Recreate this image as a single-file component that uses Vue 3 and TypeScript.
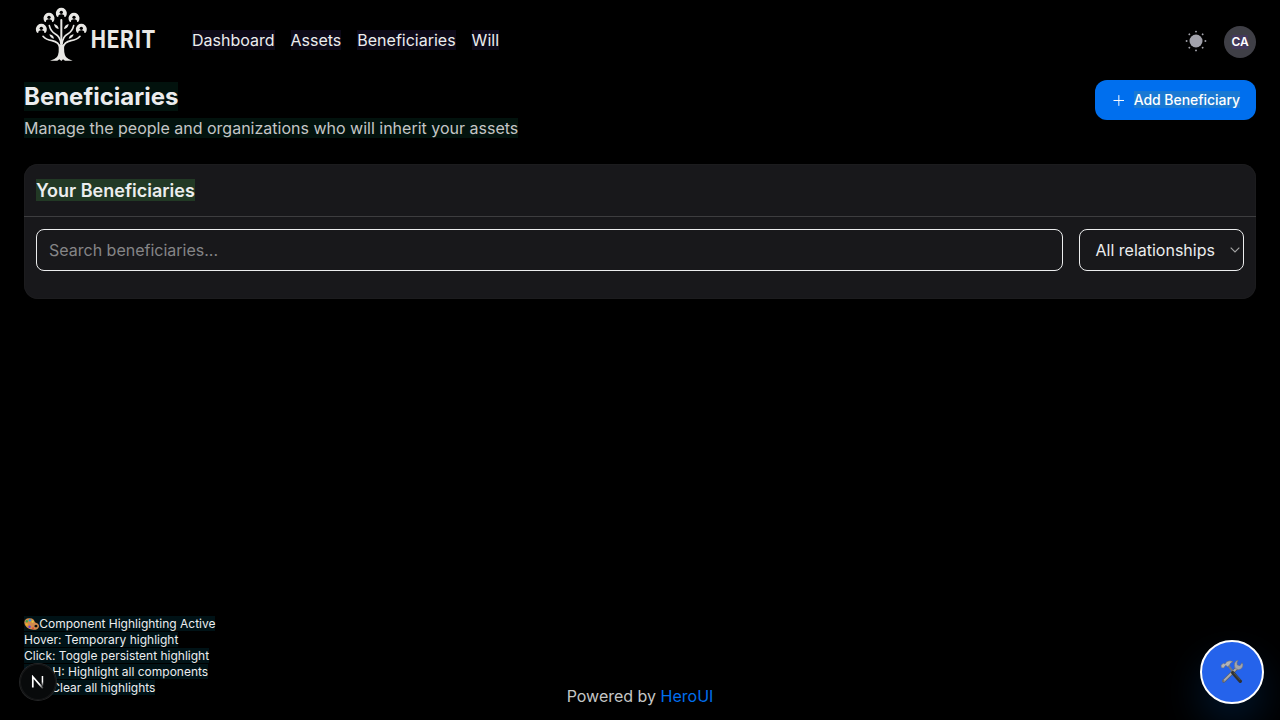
<script setup lang="ts">
import { ref } from 'vue'

const links: string[] = ['Dashboard', 'Assets', 'Beneficiaries', 'Will']
const heads: [number, number][] = [[112, 40], [75, 55], [150, 55], [52, 88], [172, 88]]
const rays: number[] = [0, 45, 90, 135, 180, 225, 270, 315]
const hints: string[] = [
  'Hover: Temporary highlight',
  'Click: Toggle persistent highlight',
  'Ctrl+H: Highlight all components',
  'Esc: Clear all highlights',
]
const search = ref('')
</script>

<template>
  <div class="page">
    <header class="navbar">
      <svg class="logo" viewBox="0 0 420 210" role="img" aria-label="Herit">
        <g fill="none" stroke="#e9e8e5" stroke-linecap="round">
          <path d="M112 60V150" stroke-width="6" />
          <path d="M76 77Q80 94 94 102Q109 110 111 132M149 77Q145 94 131 102Q116 110 114 132" stroke-width="5" />
          <path d="M57 109Q66 120 84 122Q105 126 109 145M168 109Q159 120 141 122Q120 126 116 145" stroke-width="5" />
        </g>
        <path d="M103 132Q112 138 121 132Q118 160 126 171Q132 178 146 182H123L117 178L112 183L106 178L100 182H78Q93 178 99 171Q107 160 103 132Z" fill="#e9e8e5" />
        <g fill="#e9e8e5">
          <path d="M90 72Q103 75 104 87Q92 86 90 72ZM134 72Q121 75 120 87Q132 86 134 72ZM76 103Q88 104 90 116Q79 115 76 103ZM149 103Q137 104 134 116Q146 115 149 103Z" />
        </g>
        <g v-for="([x, y], i) in heads" :key="i" :transform="`translate(${x} ${y})`">
          <path d="M-13 10A16.5 16.5 0 1 1 13 10L9 11Q10 3 0 3Q-10 3 -9 11Z" fill="#e9e8e5" />
          <circle cy="-3" r="5" fill="#000" />
          <path d="M-8 11Q-8 4 0 4Q8 4 8 11Z" fill="#000" />
        </g>
        <text transform="translate(200 143) scale(.84 1)" class="wordmark" textLength="230" lengthAdjust="spacing">HERIT</text>
      </svg>
      <nav class="links">
        <a v-for="link in links" :key="link"><span>{{ link }}</span></a>
      </nav>
      <div class="actions">
        <svg class="sun" viewBox="0 0 24 24" fill="#a1a1aa">
          <circle cx="12" cy="12" r="6.5" />
          <circle v-for="angle in rays" :key="angle" cx="12" cy="2.6" r="0.95" :transform="`rotate(${angle} 12 12)`" />
        </svg>
        <div class="avatar"><span>CA</span></div>
      </div>
    </header>

    <main>
      <section class="heading">
        <div>
          <h1><span>Beneficiaries</span></h1>
          <p><span>Manage the people and organizations who will inherit your assets</span></p>
        </div>
        <button class="add">
          <svg width="12" height="12" viewBox="0 0 12 12"><path d="M.5 6.5H11.5M6 1V12" stroke="#fff" stroke-width="1" /></svg>
          <span>Add Beneficiary</span>
        </button>
      </section>

      <section class="card">
        <div class="card-head"><h2>Your Beneficiaries</h2></div>
        <div class="filters">
          <input v-model="search" type="text" placeholder="Search beneficiaries..." />
          <div class="select">
            <span>All relationships</span>
            <svg width="10" height="6" viewBox="0 0 10 6"><path d="M.7 .7L5 5L9.3 .7" fill="none" stroke="#a5a5a5" stroke-width="1.1" /></svg>
          </div>
        </div>
      </section>
    </main>

    <footer>Powered by&nbsp;<a>HeroUI</a></footer>

    <aside class="hints">
      <div>
        <span><svg class="palette" viewBox="1 2 44 33" preserveAspectRatio="none">
          <path d="M17 3C7 2 1 8 2 16C4 29 20 36 34 34C48 31 46 18 37 16C31 15 32 10 29 7Q25 3 17 3Z" fill="#d08b4c" />
          <path d="M36 28Q42 26 39 22Q35 19 31 23Q30 28 36 28Z" fill="#080d0d" />
          <circle cx="9" cy="11" r="3.4" fill="#42a446" /><circle cx="18" cy="8" r="3.4" fill="#299ce0" />
          <circle cx="26" cy="12" r="3" fill="#e6cf38" /><circle cx="9" cy="20" r="3.3" fill="#f0b222" />
          <circle cx="17" cy="26" r="3.4" fill="#653bd8" /><circle cx="27" cy="30" r="2.6" fill="#dd4134" />
        </svg>Component Highlighting Active</span>
      </div>
      <div v-for="hint in hints" :key="hint"><span>{{ hint }}</span></div>
    </aside>

    <div class="dev-badge">
      <svg width="14" height="14" viewBox="0 0 14 14" fill="none">
        <defs>
          <linearGradient id="fade" x1="0" y1="0" x2="0" y2="1"><stop offset=".55" stop-color="#fff" /><stop offset="1" stop-color="#fff" stop-opacity="0" /></linearGradient>
          <linearGradient id="stroke-fade" x1="0" y1="0" x2="1" y2="1"><stop offset=".65" stop-color="#fff" /><stop offset="1" stop-color="#fff" stop-opacity=".15" /></linearGradient>
        </defs>
        <path d="M1.8 12.5V1.8L11.9 13.4" stroke="url(#stroke-fade)" stroke-width="1.7" />
        <rect x="10.7" y="1" width="1.5" height="10.5" fill="url(#fade)" />
      </svg>
    </div>

    <button class="tools" aria-label="Tools">
      <svg width="24" height="24" viewBox="0 0 72 72">
        <path d="M50 25L11 63" stroke="#5c5e63" stroke-width="10" stroke-linecap="round" />
        <path d="M50 25L11 63" stroke="#a8aaaf" stroke-width="6" stroke-linecap="round" />
        <circle cx="11" cy="63" r="2.5" fill="#555" />
        <path d="M55 1Q42 3 43 17Q44 29 55 29Q68 28 69 14L66 8L60 17L52 15L51 8Z" fill="#a3a5aa" stroke="#666970" stroke-width="1.5" />
        <path d="M25 16L42 40" stroke="#77787c" stroke-width="6" />
        <path d="M38 38L61 64" stroke="#303131" stroke-width="10" stroke-linecap="round" />
        <path d="M41 38L61 60" stroke="#555653" stroke-width="3" />
        <path d="M3 16L10 10L15 12L20 5Q30 0 39 5Q30 8 29 15L23 20L17 16L11 24L4 23Z" fill="#b2b3b6" stroke="#666970" stroke-width="1.5" />
      </svg>
    </button>
  </div>
</template>

<style>
body {
  margin: 0;
  background: #000;
}
</style>

<style scoped>
.page {
  box-sizing: border-box;
  position: relative;
  display: flex;
  flex-direction: column;
  height: 720px;
  overflow: hidden;
  background: #000;
  color: #ecedee;
  font: 400 16px/24px Inter, sans-serif;
}
.page * { box-sizing: border-box; }
.navbar { display: flex; height: 80px; padding: 0 24px; }
.logo { width: 140px; height: 70px; flex: none; }
.wordmark { font: 700 77px Roboto, sans-serif; fill: #e9e8e5; }
.links { display: flex; gap: 16px; margin: 28px 0 0 28px; height: 24px; }
.links span { background: #0d0918; }
.actions { display: flex; gap: 16px; margin: 26px 0 0 auto; height: 32px; }
.sun { width: 24px; height: 24px; margin-top: 3px; }
.avatar { display: grid; place-items: center; width: 32px; height: 32px; border-radius: 50%; background: #3f3f46; color: #fff; font-size: 12px; line-height: 16px; font-weight: 600; letter-spacing: -.2px; }
.avatar span { background: #43395b; line-height: 14px; }
main { flex: 1; padding: 0 24px; }
.heading { display: flex; justify-content: space-between; height: 84px; }
h1 { margin: 0; padding-top: 1px; font-size: 24px; line-height: 32px; font-weight: 700; }
h1 span, .heading p span { background: #02120d; }
.heading p { margin: 3px 0 0; color: #c5c6c6; }
.add { display: flex; align-items: center; gap: 9.5px; width: 161.5px; height: 40px; padding: 0 16px 1px 18px; border: 0; border-radius: 12px; background: #006fee; color: #fff; font: 500 14px/20px Inter, sans-serif; letter-spacing: -.05px; white-space: nowrap; }
.add span { line-height: 17px; background: #1a79d3; }
.card { height: 135px; border-radius: 14px; background: #18181b; box-shadow: inset 0 0 0 1px #1c1c1e; }
.card-head { display: flex; align-items: center; height: 53px; padding: 0 12px; border-bottom: 1px solid #3d3d3f; }
h2 { margin: 0 0 1px; padding-top: 1px; height: 22px; font-size: 18px; line-height: 22px; font-weight: 600; background: #223925; white-space: nowrap; }
.filters { display: flex; gap: 16px; padding: 12px; }
input { flex: 1; height: 42px; min-width: 0; padding: 0 12px; border: 1px solid #ecedee; border-radius: 8px; outline: 0; background: transparent; color: #ecedee; font: 400 16px/24px Inter, sans-serif; }
input::placeholder { color: #858587; opacity: 1; }
.select { display: flex; align-items: center; justify-content: space-between; width: 165.5px; height: 42px; padding: 0 3px 0 16px; border: 1px solid #ecedee; border-radius: 8px; white-space: nowrap; }
footer { display: flex; justify-content: center; height: 48px; padding-top: 12px; color: #c5c6c6; }
footer a { color: #006fee; }
.hints { position: absolute; left: 24px; top: 616px; color: #ecedee; font-size: 12px; line-height: 16px; white-space: nowrap; }
.hints span { background: #001216; }
.palette { width: 15.3px; height: 12px; vertical-align: -2px; }
.dev-badge { position: absolute; left: 20px; top: 664px; display: grid; place-items: center; width: 36px; height: 36px; border-radius: 50%; background: #080a0b; box-shadow: 0 0 0 1px #242526, inset 0 0 0 1px #171819; }
.tools { position: absolute; left: 1200px; top: 640px; display: grid; place-items: center; width: 64px; height: 64px; padding: 0; border: 2px solid #fff; border-radius: 50%; background: #2563eb; box-shadow: 0 20px 40px rgba(0, 80, 160, .28); }
</style>
